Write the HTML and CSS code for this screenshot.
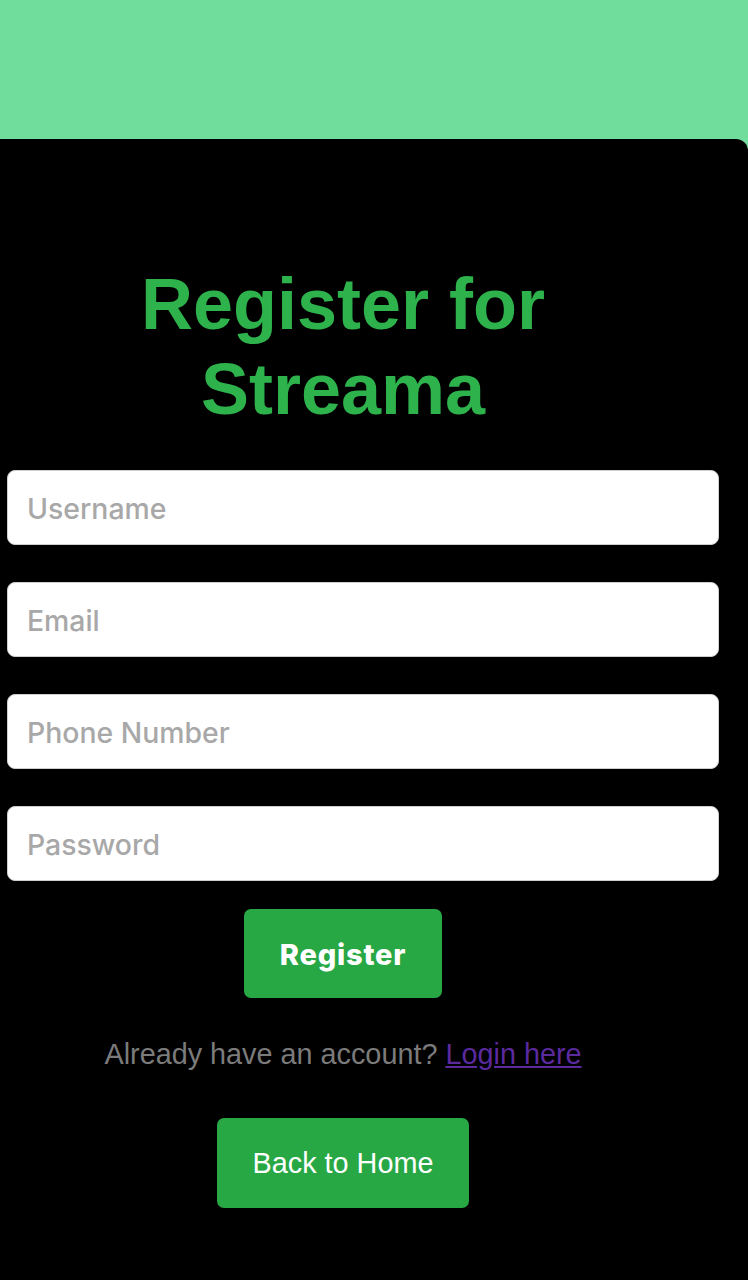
FILE: index.html
```html
<!DOCTYPE html>
<html lang="en">
<head>
<meta charset="utf-8">
<title>Register for Streama</title>
<link rel="stylesheet" href="styles.css">
</head>
<body>
<div class="top-band"></div>
<main class="card">
  <div class="form-wrap">
    <h1 class="title">Register for Streama</h1>
    <form class="form">
      <div class="fields">
        <input class="field" type="text" placeholder="Username">
        <input class="field" type="email" placeholder="Email">
        <input class="field" type="tel" placeholder="Phone Number">
        <input class="field" type="password" placeholder="Password">
      </div>
      <button class="btn btn-register" type="button">Register</button>
    </form>
    <p class="login-note">Already have an account? <a class="login-link" href="#">Login here</a></p>
    <div class="home-row">
      <a class="btn btn-home" href="#">Back to Home</a>
    </div>
  </div>
</main>
</body>
</html>
```

FILE: styles.css
```css
html, body {
  margin: 0;
  padding: 0;
}
body {
  background: #71dd9c;
  min-height: 1280px;
  font-family: "Liberation Sans", Arial, sans-serif;
}
.top-band {
  height: 139px;
}
.card {
  background: #000;
  border-top-right-radius: 12px;
  min-height: 1141px;
  padding-top: 123px;
  box-sizing: border-box;
}
.form-wrap {
  width: 672px;
  margin-left: 7px;
  display: flex;
  flex-direction: column;
  align-items: center;
}
.title {
  margin: 0;
  font-family: "Liberation Sans", Arial, sans-serif;
  font-weight: 700;
  font-size: 72px;
  line-height: 85px;
  color: #2eb24c;
  text-align: center;
}
.form {
  width: 100%;
  margin-top: 38px;
  display: flex;
  flex-direction: column;
  align-items: center;
}
.fields {
  width: 100%;
  display: flex;
  flex-direction: column;
  gap: 37px;
}
.field {
  box-sizing: content-box;
  width: 100%;
  height: 71px;
  padding: 2px 19px 0;
  margin: 0;
  border: 1px solid #cfcfcf;
  border-radius: 8px;
  background: #fff;
  font-family: Inter, "Noto Sans", sans-serif;
  font-weight: 500;
  font-size: 28.4px;
  color: #222;
  outline: none;
}
.field::placeholder {
  color: #a8a8a8;
}
.btn {
  display: flex;
  align-items: center;
  justify-content: center;
  border: none;
  border-radius: 7px;
  background: #28a745;
  color: #fff;
  text-decoration: none;
  cursor: pointer;
}
.btn-register {
  margin-top: 28px;
  width: 198px;
  height: 89px;
  padding-top: 3px;
  font-family: Inter, "Noto Sans", sans-serif;
  font-weight: 800;
  font-size: 29px;
  letter-spacing: 0.8px;
}
.login-note {
  margin: 40px 0 0;
  font-size: 28.8px;
  color: #7b7b7b;
  text-align: center;
}
.login-link {
  color: #5b2a9e;
}
.home-row {
  margin-top: 47px;
  display: flex;
  justify-content: center;
}
.btn-home {
  width: 252px;
  height: 90px;
  font-size: 28.8px;
}
```
